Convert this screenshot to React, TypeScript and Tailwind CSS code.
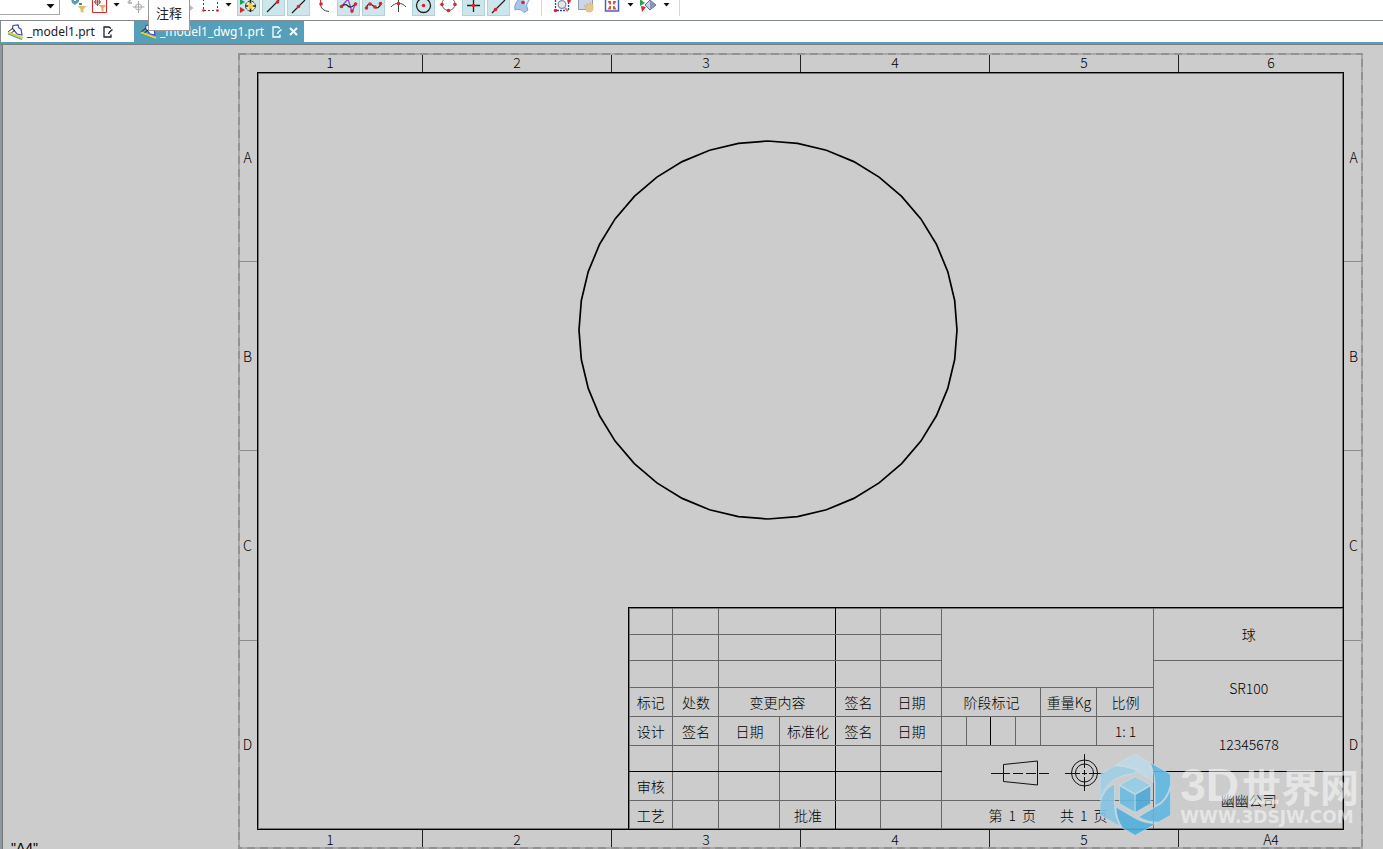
import { useState, type ReactNode } from "react";
import { clsx } from "clsx";

const RED = "#d8262c";

function Dot({ x, y }: { x: number; y: number }) {
  return <circle cx={x} cy={y} r="1.8" fill={RED} />;
}

/** One toolbar slot. The glyph is drawn on a 23x16 grid. */
function Tool({
  label,
  active,
  children,
}: {
  label: string;
  active?: boolean;
  children: ReactNode;
}) {
  return (
    <button
      type="button"
      aria-label={label}
      className={clsx(
        "h-4 w-[23px] shrink-0 border-x border-b",
        active ? "border-[#aed3da] bg-[#cde6eb]" : "border-transparent",
      )}
    >
      <svg viewBox="1 0 21 15" className="block h-[15px] w-[21px]" fill="none">
        {children}
      </svg>
    </button>
  );
}

function MenuArrow({ label }: { label: string }) {
  return (
    <button type="button" aria-label={label} className="h-3 w-[7px] shrink-0">
      <svg viewBox="0 0 7 12" className="block h-3 w-[7px]">
        <path d="M0.5 3h6L3.5 6.5z" fill="#111" />
      </svg>
    </button>
  );
}

function Divider() {
  return <span className="h-4 w-px shrink-0 bg-[#d6d8dc]" />;
}

function Toolbar() {
  return (
    <div className="flex h-[21px] shrink-0 items-start border-b border-[#838b91] bg-white">
      <div className="relative h-[15px] w-[60px] shrink-0">
        <select
          aria-label="选择范围"
          className="h-full w-full appearance-none border-r border-b border-[#a9a9a9] bg-white"
        />
        <svg
          viewBox="0 0 9 5"
          className="pointer-events-none absolute top-1 right-[5px] h-[5px] w-[9px]"
        >
          <path d="M0.5 0h8L4.500 4.500z" fill="#111" />
        </svg>
      </div>

      <div className="ml-[7px] flex">
        <Tool label="重置过滤器">
          <path d="M4 -1h8v3l-4 3-3-2z" fill="#5aa0aa" />
          <path d="M7 -1h2v2H7z" fill="#fff" />
          <path d="M12 3h3v2h-3z" fill="#3f8f9a" />
          <path d="M10.500 6h9l-3 3v4l-3-1.500V9z" fill="#e2bd62" />
        </Tool>
        <Tool label="选择意图">
          <path d="M2.500 -1v13.500h14V-1" stroke={RED} />
          <circle cx="7.500" cy="2" r="2.500" stroke="#a4474c" />
          <path d="M4 2h7M7.500 -1v7" stroke="#a4474c" />
          <path d="M8.500 5h8l-3 3v4l-2-1V8z" fill="#e2ad5e" />
        </Tool>
      </div>
      <MenuArrow label="更多过滤器" />
      <div className="ml-[5px] flex gap-[29px]">
        <Tool label="定向">
          <path d="M3 3l3-4M3 3h4" stroke="#bbb" strokeWidth="2" />
          <circle cx="13.500" cy="7" r="3" stroke="#aaa" />
          <path d="M13.500 1v12M7.500 7h12" stroke="#aaa" />
        </Tool>
        <Tool label="移动">
          <path d="M10 4l5 4-5 4" stroke="#bbb" strokeWidth="2" />
        </Tool>
      </div>
      <div className="flex">
        <Tool label="矩形选择">
          <path d="M3.500 -1v11.500h14V-1" stroke="#444" strokeDasharray="2 2" />
          <circle cx="3.500" cy="10.500" r="1.300" fill={RED} />
          <circle cx="17.500" cy="10.500" r="1.300" fill={RED} />
        </Tool>
      </div>
      <span className="ml-[2px] flex">
        <MenuArrow label="更多选择方式" />
      </span>

      <div className="ml-[5px] flex gap-[2px]">
        <Tool label="启用捕捉点" active>
          <path d="M3 -1l5 3-5 3z" fill="#18a05a" />
          <path d="M3 7l5 3-5 3z" fill={RED} />
          <circle cx="13.500" cy="6" r="5" fill="#efe9c0" stroke="#444" strokeDasharray="3 1" />
          <path d="M8 6h11M13.500 0v12" stroke="#222" strokeWidth="1.500" />
          <path d="M13.500 3l3 3-3 3-3-3z" fill="#f8d230" />
        </Tool>
        <Tool label="端点" active>
          <path d="M5 12L17 0" stroke="#222" strokeWidth="1.200" />
          <Dot x={15.5} y={2} />
        </Tool>
        <Tool label="中点" active>
          <path d="M5 13L18 0" stroke="#222" strokeWidth="1.200" />
          <Dot x={11.5} y={6.5} />
        </Tool>
        <Tool label="控制点">
          <path d="M8.500 0v4c0 4 3 7 8.500 7.500" stroke="#444" />
          <path d="M8.500 0v4" stroke={RED} />
          <Dot x={9} y={4} />
        </Tool>
        <Tool label="极点" active>
          <path d="M4 7l7-8 4 13 4-9" stroke="#9b3fd0" strokeWidth="1.300" />
          <path d="M4 7c3-3 5-3 7-1s5 1 8-3" stroke="#222" strokeWidth="1.200" />
          <Dot x={4.5} y={6.5} />
          <Dot x={15} y={11} />
          <Dot x={18.5} y={4} />
        </Tool>
        <Tool label="定义点" active>
          <path d="M4 8.500c2-6 5-5 8-2s6 1 7-3.500" stroke="#222" strokeWidth="1.200" />
          <Dot x={4.5} y={8} />
          <Dot x={8} y={4} />
          <Dot x={13} y={7} />
          <Dot x={18.5} y={3.5} />
        </Tool>
        <Tool label="交点">
          <path d="M4 7c4-5 11-5 15 0M11.500 0v12" stroke="#444" />
          <Dot x={11.5} y={3.5} />
        </Tool>
        <Tool label="圆弧中心" active>
          <circle cx="11.500" cy="5.500" r="7" stroke="#222" strokeWidth="1.300" />
          <Dot x={11.5} y={5.5} />
        </Tool>
        <Tool label="象限点">
          <circle cx="11.500" cy="4" r="6.500" stroke="#666" />
          <Dot x={5} y={4.5} />
          <Dot x={18} y={4.5} />
          <Dot x={11.5} y={10.5} />
        </Tool>
        <Tool label="现有点" active>
          <path d="M5 5.500h13M11.500 -1v13" stroke="#222" strokeWidth="1.300" />
          <Dot x={11.5} y={5.5} />
        </Tool>
        <Tool label="曲线上的点" active>
          <path d="M5 13L18 0" stroke="#222" strokeWidth="1.200" />
          <Dot x={8.5} y={9.5} />
        </Tool>
        <Tool label="面上的点">
          <path d="M3 10c-1-4 1-8 4-11h11c-2 3-4 6-3 8l1 3-4 2.500C10 10 7 8.500 3 10z" fill="#a9c6e8" stroke="#7d9fca" />
          <path d="M12 -1h5c-2 3-4 5-3 8" fill="#dfeaf6" />
          <Dot x={11} y={2.5} />
        </Tool>
      </div>
      <span className="ml-[6px] flex">
        <Divider />
      </span>
      <div className="ml-2 flex gap-[2px]">
        <Tool label="缩放到选择">
          <path d="M5.500 0v10.500h13V0" stroke="#2f3fd0" strokeWidth="1.300" strokeDasharray="2 1" />
          <circle cx="12" cy="4.500" r="3.800" fill="#dfe8f0" stroke="#8b929b" strokeWidth="1.300" />
          <path d="M15 8l3 3" stroke="#b69a4e" strokeWidth="2" />
          <Dot x={5.5} y={10.5} />
          <Dot x={19} y={1} />
        </Tool>
        <Tool label="平移">
          <path d="M3.500 -1v10.500h14V-1z" fill="#cbd6e8" stroke="#8c99b8" />
          <path d="M9 5l3 1V3l2 2 1-3 1 3 2-1 0 6-2 2h-4z" fill="#e5c88f" stroke="#cfae78" strokeWidth="0.500" />
        </Tool>
        <Tool label="适合窗口">
          <path d="M5.500 -1v12h13V-1z" fill="#fff" stroke="#4a5fd0" strokeWidth="1.500" />
          <path d="M7.500 1h3.500v3.500H9.500zM16.500 1H13v3.500h1.500zM7.500 9.500h3.500V6H9.500zM16.500 9.500H13V6h1.500z" fill="#e4543f" />
        </Tool>
      </div>
      <span className="ml-1 flex">
        <MenuArrow label="更多视图" />
      </span>
      <span className="ml-[3px] flex">
        <Tool label="渲染样式">
          <path d="M3 -1l5 4-5 3z" fill="#1fa64c" />
          <path d="M4 6l5 1-4 5z" fill={RED} />
          <path d="M8 5l5-5 6 5-6 5z" fill="#c7d1e6" stroke="#5e6c93" />
          <path d="M13 0l6 5-6 5z" fill="#8795b8" />
        </Tool>
      </span>
      <span className="ml-[3px] flex">
        <MenuArrow label="更多样式" />
      </span>
      <span className="ml-[9px] flex">
        <Divider />
      </span>
    </div>
  );
}

function PartIcon() {
  return (
    <svg viewBox="0 0 17 16" className="h-4 w-[17px] shrink-0" fill="none">
      <path d="M5.500 4.500L6 1.500l5-.5 1 3 2 1 1 6-5-1z" fill="#fff" stroke="#3a48d8" strokeWidth="1.200" />
      <path d="M1 8l5-4M3 10l5-4" stroke="#222" />
      <path d="M1 8.500l15 5.500" stroke="#e8cf3a" strokeWidth="2.200" />
      <path d="M1 10l14 5.500" stroke="#3fa79b" strokeWidth="1.200" />
    </svg>
  );
}

function EditedIcon() {
  return (
    <svg viewBox="0 0 11 12" className="h-3 w-[11px] shrink-0" fill="none" stroke="currentColor">
      <path d="M8 8.500V11H1V1h5l2 1.500" strokeWidth="1.300" />
      <path d="M5.500 8l1-2L9.500 3.500" strokeWidth="1.300" />
    </svg>
  );
}

function PartTabs() {
  const [current, setCurrent] = useState("_model1_dwg1.prt");

  return (
    <div
      role="tablist"
      className="flex h-[24px] shrink-0 items-start border-b border-[#7f7f7f] bg-white text-xs leading-5 shadow-[inset_0_-2px_0_#559fb9]"
    >
      <button
        type="button"
        role="tab"
        aria-selected={current === "_model1.prt"}
        onClick={() => setCurrent("_model1.prt")}
        className="flex h-[21px] w-[134px] items-center border-l border-[#838b91] pl-[6px] text-[#222]"
      >
        <PartIcon />
        <span className="ml-[3px]">_model1.prt</span>
        <span className="ml-[8px]">
          <EditedIcon />
        </span>
      </button>
      <div className="flex h-[21px] items-center bg-[#559fb9] pr-[6px] pl-[6px] text-white">
        <button
          type="button"
          role="tab"
          aria-selected={current === "_model1_dwg1.prt"}
          onClick={() => setCurrent("_model1_dwg1.prt")}
          className="flex items-center"
        >
          <PartIcon />
          <span className="ml-[3px]">_model1_dwg1.prt</span>
          <span className="ml-[8px]">
            <EditedIcon />
          </span>
        </button>
        <button type="button" aria-label="关闭" className="ml-[6px]">
          <svg viewBox="0 0 9 9" className="h-[9px] w-[9px]" stroke="#fff" strokeWidth="2">
            <path d="M1 1l7 7M8 1l-7 7" />
          </svg>
        </button>
      </div>
    </div>
  );
}

/** Numbered strip along the top and bottom edge of the sheet. */
function ColumnRuler({ labels }: { labels: string[] }) {
  return (
    <div className="grid h-[19px] shrink-0 grid-cols-[185fr_189fr_189fr_189fr_189fr_184fr] divide-x divide-[#222] text-center leading-[18px]">
      {labels.map((label) => (
        <span key={label}>{label}</span>
      ))}
    </div>
  );
}

/** Lettered strip along the left and right edge of the sheet. */
function RowRuler() {
  return (
    <div className="grid w-[19px] shrink-0 grid-rows-4 divide-y divide-[#8c8c8c] text-center">
      <span className="flex items-center justify-center pb-[18px]">A</span>
      <span className="flex items-center justify-center">B</span>
      <span className="flex items-center justify-center">C</span>
      <span className="flex items-center justify-center pt-[18px]">D</span>
    </div>
  );
}

const SIDES = 40;
const RADIUS = 189;

const spherePoints = Array.from({ length: SIDES }, (_, i) => {
  const angle = (i * 2 * Math.PI) / SIDES;
  return `${191 + RADIUS * Math.cos(angle)},${191 + RADIUS * Math.sin(angle)}`;
}).join(" ");

function SphereView() {
  return (
    <svg viewBox="0 0 382 382" className="mt-[66px] ml-[29.4%] w-[382px] shrink-0">
      <polygon points={spherePoints} fill="none" stroke="#000" strokeWidth="1.700" />
    </svg>
  );
}

function ProjectionSymbol() {
  return (
    <svg viewBox="0 0 114 38" className="mx-auto block h-[38px] w-[114px]" fill="none" stroke="#111">
      <path d="M12.500 10.500L46.500 7v24L12.500 27.500z" />
      <path d="M0 19.500h58" strokeDasharray="19 3 10 3 10 3" />
      <circle cx="93.500" cy="19" r="13" />
      <circle cx="93.500" cy="19" r="9" />
      <path d="M74 19.500h15m2 0h5m2 0h15M93.500 0v14m0 2v5m0 2v14" />
    </svg>
  );
}

const COLUMNS = [44, 46, 61, 56, 45, 61, 25, 24, 25, 25, 56, 57, 189];

function Cell({
  children,
  span,
  rows,
  dark,
  line,
}: {
  children?: ReactNode;
  span?: number;
  rows?: number;
  /** black right edge */
  dark?: boolean;
  /** black bottom edge */
  line?: boolean;
}) {
  return (
    <td
      colSpan={span}
      rowSpan={rows}
      className={clsx(
        "border-r border-b p-0",
        dark ? "border-r-black" : "border-r-[#666]",
        line ? "border-b-black" : "border-b-[#666]",
      )}
    >
      {children}
    </td>
  );
}

function BlankRevision({ last, children }: { last?: boolean; children?: ReactNode }) {
  return (
    <tr className={last ? "h-[27px]" : "h-[26px]"}>
      <Cell />
      <Cell />
      <Cell span={2} dark />
      <Cell />
      <Cell />
      {children}
    </tr>
  );
}

function TitleBlock() {
  return (
    <div className="mt-auto -mr-px -mb-px w-[66%] self-end border border-black shadow-[inset_0_0_0_1px_#777]">
      <table className="w-full table-fixed border-collapse border-hidden text-center text-sm leading-5 whitespace-nowrap">
        <colgroup>
          {COLUMNS.map((width, i) => (
            <col key={i} style={{ width }} />
          ))}
        </colgroup>
        <tbody>
          <BlankRevision>
            <Cell span={6} rows={3} />
            <Cell rows={2}>球</Cell>
          </BlankRevision>
          <BlankRevision />
          <BlankRevision last>
            <Cell rows={2}>SR100</Cell>
          </BlankRevision>
          <tr className="h-[29px]">
            <Cell>标记</Cell>
            <Cell>处数</Cell>
            <Cell span={2} dark>
              变更内容
            </Cell>
            <Cell>签名</Cell>
            <Cell>日期</Cell>
            <Cell span={4}>阶段标记</Cell>
            <Cell>重量Kg</Cell>
            <Cell>比例</Cell>
          </tr>
          <tr className="h-[29px]">
            <Cell>设计</Cell>
            <Cell>签名</Cell>
            <Cell>日期</Cell>
            <Cell dark>标准化</Cell>
            <Cell>签名</Cell>
            <Cell>日期</Cell>
            <Cell />
            <Cell dark />
            <Cell />
            <Cell />
            <Cell />
            <Cell>1: 1</Cell>
            <Cell rows={2} line>
              12345678
            </Cell>
          </tr>
          <tr className="h-[26px]">
            <Cell line />
            <Cell line />
            <Cell line />
            <Cell dark line />
            <Cell line />
            <Cell line />
            <Cell span={6} rows={2}>
              <ProjectionSymbol />
            </Cell>
          </tr>
          <tr className="h-[29px]">
            <Cell>审核</Cell>
            <Cell />
            <Cell />
            <Cell dark />
            <Cell />
            <Cell />
            <Cell rows={2}>幽幽公司</Cell>
          </tr>
          <tr className="h-[29px]">
            <Cell>工艺</Cell>
            <Cell />
            <Cell />
            <Cell dark>批准</Cell>
            <Cell />
            <Cell />
            <Cell span={6}>
              <span className="flex justify-center gap-6">
                <span className="flex gap-[6px]">
                  <span>第</span>
                  <span>1</span>
                  <span>页</span>
                </span>
                <span className="flex gap-[6px]">
                  <span>共</span>
                  <span>1</span>
                  <span>页</span>
                </span>
              </span>
            </Cell>
          </tr>
        </tbody>
      </table>
    </div>
  );
}

function SiteLogo() {
  return (
    <svg viewBox="18 19 214 246" className="h-[82px] w-[71px] shrink-0 opacity-90" stroke="#d3e3ea" strokeWidth="2">
      <path d="M66 51L124 19L165 43Q178 68 178 104Q138 54 66 51z" fill="#bddbe8" />
      <path d="M18 80L62 54Q126 56 160 90L124 71L122 78Q38 84 20 156L18 156z" fill="#a0d0e6" />
      <path d="M18 166Q28 124 62 108V174Q62 208 80 238L18 203z" fill="#85c5e3" />
      <path d="M66 178L124 212Q152 228 188 228L124 264L86 242Q66 212 66 178z" fill="#51b0de" />
      <path d="M231 120V203L194 224Q160 224 134 208L184 178Q218 166 231 120z" fill="#62b7df" />
      <path d="M168 43L231 80V110Q220 160 184 174V104Q182 70 168 43z" fill="#5fb9e0" />
      <path d="M124 86L171 112L124 139L77 112z" fill="#94cee7" />
      <path d="M77 114L124 141V195L77 168z" fill="#6abce0" />
      <path d="M171 114L124 141V195L171 168z" fill="#4ca9d6" />
    </svg>
  );
}

function Watermark() {
  return (
    <div className="pointer-events-none absolute right-[24px] bottom-[13px] flex items-center gap-[9px] text-white/50">
      <SiteLogo />
      <div className="font-bold">
        <p className="flex items-center leading-[44px]">
          <span className="font-['Liberation_Sans',sans-serif] text-[46px]">3D</span>
          <span className="ml-[3px] font-['Noto_Sans_CJK_SC',sans-serif] text-[39px]">世界网</span>
        </p>
        <p className="font-['DejaVu_Sans',sans-serif] text-[17px] leading-5">WWW.3DSJW.COM</p>
      </div>
    </div>
  );
}

function Sheet() {
  return (
    <div className="relative flex min-h-[640px] flex-1 flex-col font-['Noto_Sans_CJK_SC',sans-serif] text-sm font-light text-black">
      <svg className="pointer-events-none absolute inset-0 h-full w-full" fill="none">
        <rect width="100%" height="100%" stroke="#aaa" strokeWidth="4" />
        <rect width="100%" height="100%" stroke="#929292" strokeWidth="4" strokeDasharray="8 5" />
      </svg>
      <ColumnRuler labels={["1", "2", "3", "4", "5", "6"]} />
      <div className="flex flex-1">
        <RowRuler />
        <div className="flex flex-1 flex-col border border-black shadow-[inset_0_0_0_1px_#777]">
          <SphereView />
          <TitleBlock />
        </div>
        <RowRuler />
      </div>
      <ColumnRuler labels={["1", "2", "3", "4", "5", "A4"]} />
    </div>
  );
}

export default function App() {
  return (
    <div className="relative flex h-screen flex-col overflow-hidden bg-[#ccc] font-['Noto_Sans','Noto_Sans_CJK_SC',sans-serif]">
      <Toolbar />
      <PartTabs />
      <main className="relative flex flex-1 flex-col border-l-2 border-[#8c99a5] pt-2 pr-5 pl-[236px] shadow-[inset_1px_0_0_#777]">
        <Sheet />
        <span className="absolute -bottom-[7px] left-[9px] font-['Liberation_Sans',sans-serif] text-sm leading-4">
          "A4"
        </span>
        <Watermark />
      </main>
      <div
        role="tooltip"
        className="absolute top-0 left-[148px] h-[31px] w-[42px] border border-t-0 border-[#999] bg-white pt-[3px] text-center font-['Noto_Sans_CJK_SC',sans-serif] text-[13px] leading-5 text-[#222]"
      >
        注释
      </div>
    </div>
  );
}
